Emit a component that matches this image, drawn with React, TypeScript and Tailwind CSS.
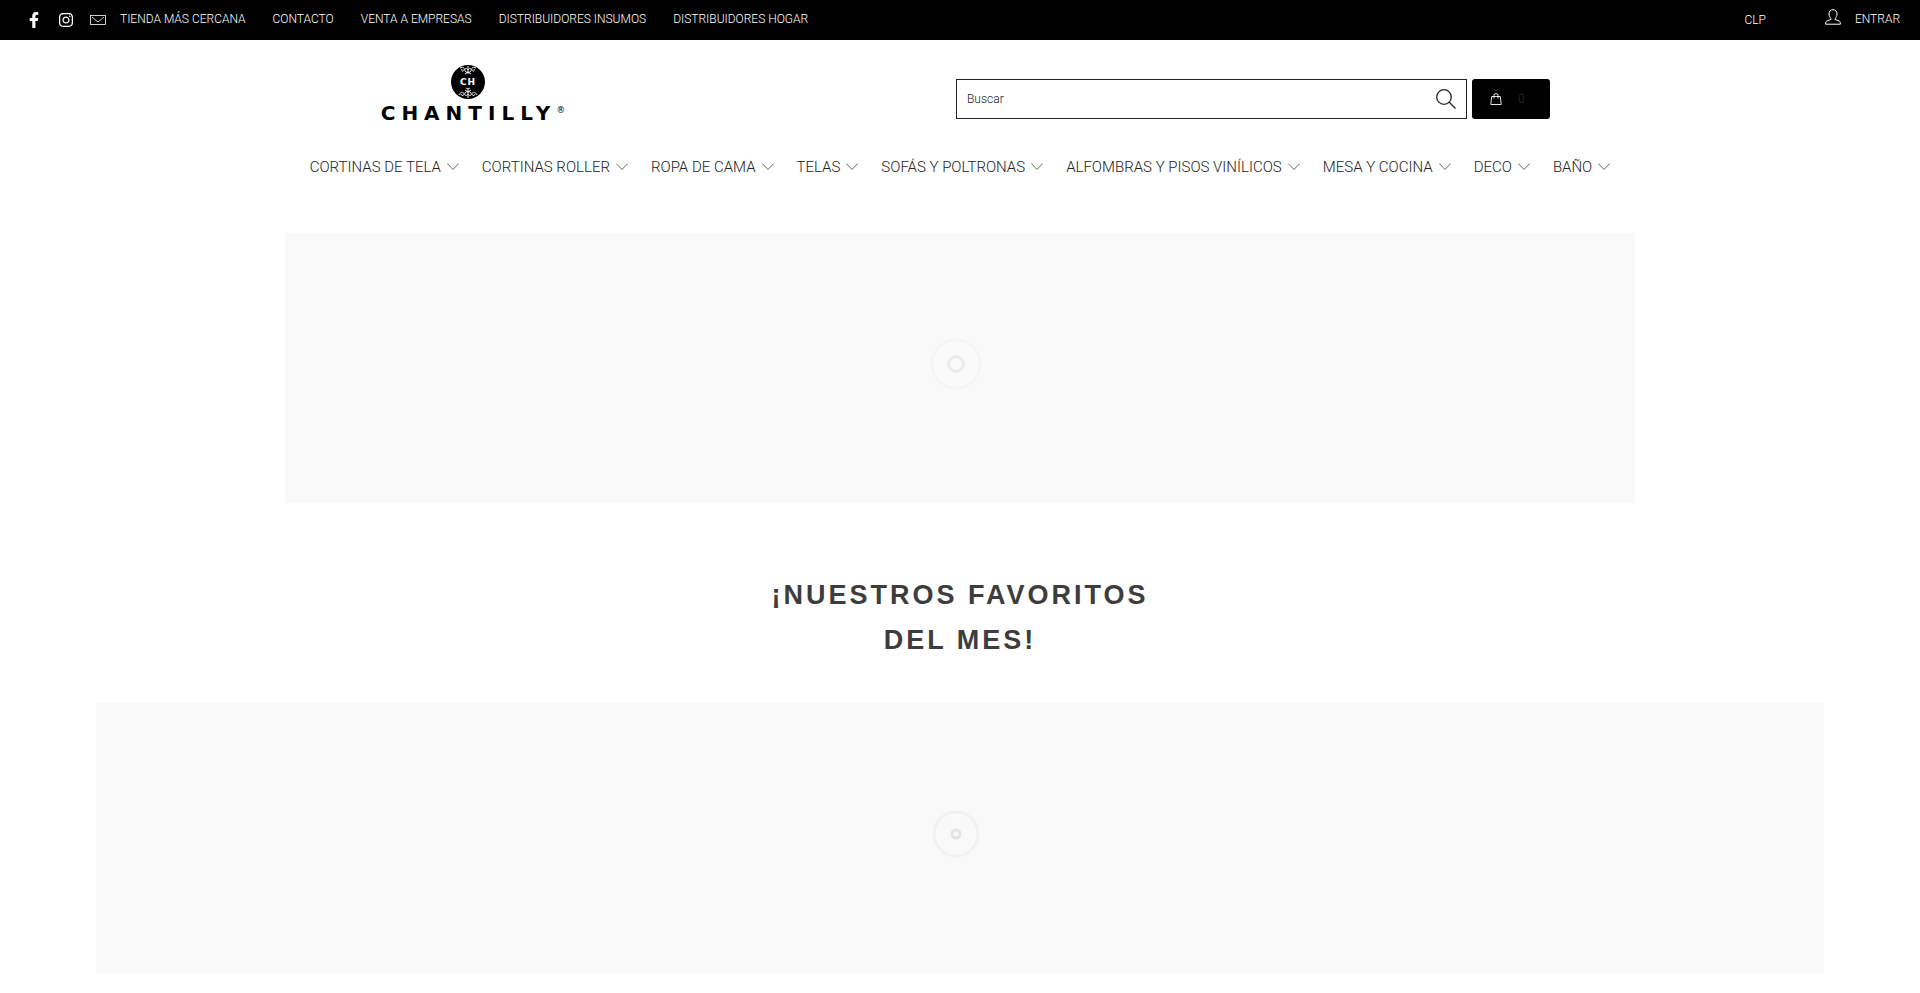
import { FaFacebookF, FaInstagram } from 'react-icons/fa';

const topLinks = [
  'TIENDA MÁS CERCANA',
  'CONTACTO',
  'VENTA A EMPRESAS',
  'DISTRIBUIDORES INSUMOS',
  'DISTRIBUIDORES HOGAR',
];

const categories = [
  'CORTINAS DE TELA',
  'CORTINAS ROLLER',
  'ROPA DE CAMA',
  'TELAS',
  'SOFÁS Y POLTRONAS',
  'ALFOMBRAS Y PISOS VINÍLICOS',
  'MESA Y COCINA',
  'DECO',
  'BAÑO',
];

const TopBar = () => (
  <div className="flex h-10 items-center justify-between bg-black pl-[26px] pr-5 text-xs font-light text-white">
    <div className="flex items-center">
      <div className="mr-[14px] flex items-center gap-4">
        <a href="#facebook" aria-label="Facebook">
          <FaFacebookF className="h-4 w-4" />
        </a>
        <a href="#instagram" aria-label="Instagram">
          <FaInstagram className="h-4 w-4" />
        </a>
        <a href="#email" aria-label="Email">
          <svg className="h-[10px] w-4" viewBox="0 0 16 10" fill="none" stroke="currentColor" strokeWidth="0.8">
            <rect x="0.5" y="0.5" width="15" height="9" />
            <path d="M2 2l6 5 6-5" />
          </svg>
        </a>
      </div>
      <nav className="flex gap-[27px] pb-[2px]">
        {topLinks.map((link) => (
          <a key={link} href="#link">{link}</a>
        ))}
      </nav>
    </div>
    <div className="flex items-center gap-[59px]">
      <button type="button">CLP</button>
      <a href="#login" className="flex items-center gap-[14px] pb-[2px]">
        <svg className="mb-1 h-4 w-4" viewBox="0 0 16 16" fill="none" stroke="currentColor">
          <path d="M8 0.7c-2.4 0-4 1.7-4 4.3 0 2 .8 3.600 2 4.400v1L1.800 12C.9 12.500.6 13.500.6 15.200h14.800c0-1.700-.3-2.700-1.200-3.200L10 10.400v-1c1.200-.8 2-2.400 2-4.400C12 2.400 10.400.7 8 .7z" />
        </svg>
        ENTRAR
      </a>
    </div>
  </div>
);

const Logo = () => (
  <a href="#home" aria-label="Chantilly" className="flex w-[206px] flex-col text-black">
    <svg className="ml-[81px] h-[34px] w-[34px]" viewBox="0 0 34 34">
      <circle cx="17" cy="17" r="17" />
      <g fill="none" stroke="#fff" strokeWidth="0.9">
        <path d="M17 1v8M9 3c3-2 5 0 4 2s-3 1-2-1M25 3c-3-2-5 0-4 2s3 1 2-1M17 5c-2-3-4-1-3 1s3 1 3 1 2 1 3-1-1-4-3-1M14 9l3-2 3 2" />
        <path d="M17 33v-9M8 30c2-4 5-3 5-1s-3 2-3 0M26 30c-2-4-5-3-5-1s3 2 3 0M17 29c-2 3-4 1-3-1s3-1 3-1 2-1 3 1-1 4-3 1M14 25l3 2 3-2M15 23l2 1 2-1" />
      </g>
      <text x="17" y="20" textAnchor="middle" fill="#fff" className="font-['DejaVu_Sans'] text-[9px] font-bold tracking-widest">
        CH
      </text>
    </svg>
    <span className="mt-2 flex h-3 items-start justify-center font-['DejaVu_Sans']">
      <span className="text-xl leading-3 font-bold tracking-[0.3em]">CHANTILLY</span>
      <span className="text-[9px] leading-[6px]">®</span>
    </span>
  </a>
);

const Chevron = () => (
  <svg className="h-2 w-3" viewBox="0 0 12 8" fill="none" stroke="currentColor" strokeWidth="0.7">
    <path d="M0.300 0.500L6 6.500l5.700-6" />
  </svg>
);

const Header = () => (
  <header>
    <div className="mx-auto flex max-w-[1180px] items-end justify-between pt-[25px]">
      <Logo />
      <div className="flex w-[594px] gap-[5px]">
        <form className="flex h-10 flex-1 items-center border border-[#222] pl-[10px] pr-[10px]">
          <input
            type="text"
            aria-label="Buscar"
            placeholder="Buscar"
            className="min-w-0 flex-1 text-xs font-light outline-none placeholder:text-[#222]"
          />
          <button type="submit" aria-label="Buscar" className="text-[#222]">
            <svg className="h-5 w-5" viewBox="0 0 20 20" fill="none" stroke="currentColor" strokeWidth="1.3">
              <circle cx="8" cy="8" r="7.300" />
              <path d="M13 13l6.500 6.500" />
            </svg>
          </button>
        </form>
        <a href="#cart" className="flex h-10 w-[78px] items-center gap-4 rounded-[3px] bg-black pl-[18px] text-xs font-light text-[#333]">
          <svg className="h-3 w-3 text-white" viewBox="0 0 12 12" fill="none" stroke="currentColor" strokeWidth="0.900">
            <path d="M1.700 3.500h8.600l.9 8H.8zM4 5.500V2.500a2 2 0 0 1 4 0v3" />
          </svg>
          0
        </a>
      </div>
    </div>
    <nav className="mt-9 flex justify-center gap-[23px] text-[15px] leading-6 font-light text-[#222]">
      {categories.map((category) => (
        <a key={category} href="#category" className="flex items-center gap-[6px]">
          {category}
          <Chevron />
        </a>
      ))}
    </nav>
  </header>
);

export default function App() {
  return (
    <div className="min-h-screen bg-white pb-5 font-[Roboto,sans-serif]">
      <TopBar />
      <Header />
      <main>
        <section className="mx-auto mt-[54px] flex h-[270px] max-w-[1350px] items-center justify-center bg-[#f9f9f9] pr-2 pb-2">
          <svg className="h-[52px] w-[52px]" viewBox="0 0 52 52" fill="none">
            <circle cx="26" cy="26" r="24" fill="#fafafa" stroke="#f5f5f5" strokeWidth="3" />
            <circle cx="26" cy="26" r="7.500" stroke="#ebebeb" strokeWidth="3" />
          </svg>
        </section>
        <h2 className="mt-[70px] text-center font-['Liberation_Sans',sans-serif] text-[27px] leading-[45px] font-bold tracking-[3px] text-[#3d3d3d]">
          ¡NUESTROS FAVORITOS
          <br />
          DEL MES!
        </h2>
        <section className="mx-auto mt-10 flex h-[270px] w-[90%] items-center justify-center bg-[#f9f9f9] pr-2 pb-2">
          <svg className="h-[52px] w-[52px]" viewBox="0 0 52 52" fill="none">
            <circle cx="26" cy="26" r="22" stroke="#f1f1f1" strokeWidth="3" />
            <circle cx="26" cy="26" r="4" stroke="#e3e3e3" strokeWidth="3" />
          </svg>
        </section>
      </main>
    </div>
  );
}
